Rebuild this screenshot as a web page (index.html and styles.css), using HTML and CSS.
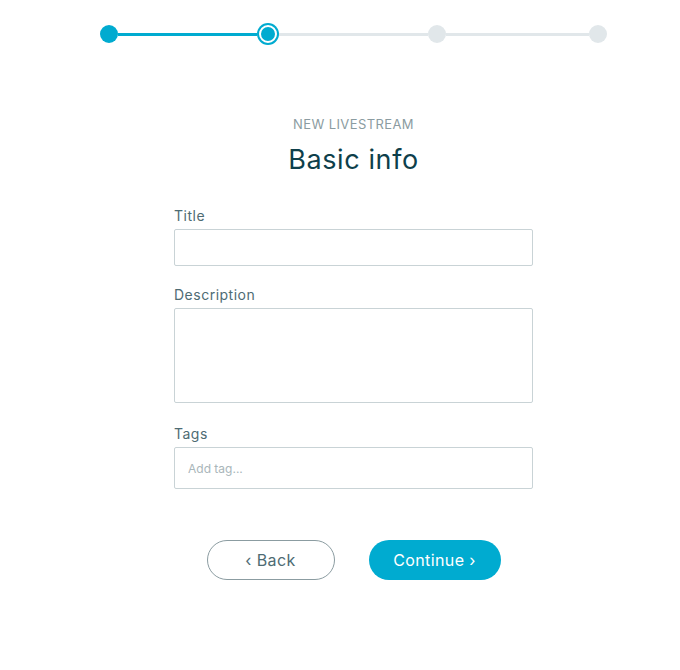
FILE: index.html
```html
<!DOCTYPE html>
<html lang="en">
<head>
    <meta charset="UTF-8">
    <meta name="viewport" content="width=device-width, initial-scale=1.0">
    <title>New livestream</title>
    <link rel="stylesheet" href="styles.css">
</head>
<body>
    <div class="page">
        <!-- steps -->
        <div class="steps">
            <span class="dot done"></span>
            <span class="line done w1"></span>
            <span class="dot current"></span>
            <span class="line w2"></span>
            <span class="dot"></span>
            <span class="line w3"></span>
            <span class="dot"></span>
        </div>

        <p class="eyebrow">NEW LIVESTREAM</p>
        <h1 class="heading">Basic info</h1>

        <form class="form">
            <label class="field">
                <span class="label">Title</span>
                <input type="text" class="input">
            </label>
            <label class="field field-tall">
                <span class="label">Description</span>
                <textarea class="input textarea"></textarea>
            </label>
            <label class="field">
                <span class="label">Tags</span>
                <input type="text" class="input tags" placeholder="Add tag...">
            </label>

            <div class="actions">
                <button type="button" class="btn btn-back">&lsaquo; Back</button>
                <button type="button" class="btn btn-next">Continue &rsaquo;</button>
            </div>
        </form>
    </div>
</body>
</html>
```

FILE: styles.css
```css
html, body {
    margin: 0;
    background: #fff;
    font-family: Inter, "Open Sans", sans-serif;
}

.page {
    width: 680px;
    box-sizing: border-box;
    padding-left: 27px;
    display: flex;
    flex-direction: column;
    align-items: center;
}

/* ステップ表示 */
.steps {
    display: flex;
    align-items: center;
    margin-top: 23px;
    height: 22px;
}

.dot {
    width: 18px;
    height: 18px;
    border-radius: 50%;
    background-color: #e1e7ea;
    flex: none;
}

.dot.done {
    background-color: #00abd0;
}

.dot.current {
    width: 14px;
    height: 14px;
    margin: 0 2px;
    background-color: #00abd0;
    border: 2px solid #fff;
    box-shadow: 0 0 0 2px #00abd0;
}

.line {
    height: 3px;
    background-color: #e1e7ea;
    flex: none;
}

.line.done {
    background-color: #00abd0;
}

.w1 { width: 139px; }
.w2 { width: 149px; }
.w3 { width: 143px; }

.eyebrow {
    margin: 71px 0 0;
    font-size: 13px;
    letter-spacing: 0.4px;
    color: #8b9ca1;
}

.heading {
    margin: 11px 0 0;
    font-size: 27px;
    font-weight: 400;
    letter-spacing: 0.6px;
    color: #0e3f4b;
}

.form {
    width: 359px;
    margin-top: 31px;
}

.field {
    display: block;
    margin-bottom: 20px;
}

.field-tall {
    margin-bottom: 22px;
}

.label {
    display: block;
    font-size: 14px;
    letter-spacing: 0.5px;
    color: #4e6b73;
    margin-bottom: 5px;
}

.input {
    display: block;
    box-sizing: border-box;
    width: 100%;
    height: 37px;
    margin: 0;
    border: 1px solid #c9d3d6;
    border-radius: 2px;
    font-family: inherit;
    font-size: 14px;
    padding: 0 13px;
}

.textarea {
    height: 95px;
    resize: none;
    padding: 10px 13px;
}

.tags {
    height: 42px;
    font-size: 12px;
}

.tags::placeholder {
    color: #a9b6ba;
}

.actions {
    display: flex;
    justify-content: center;
    gap: 34px;
    margin-top: 51px;
}

.btn {
    height: 40px;
    border-radius: 20px;
    font-family: inherit;
    font-size: 16px;
    letter-spacing: 0.4px;
    cursor: pointer;
}

.btn-back {
    width: 128px;
    background: #fff;
    border: 1px solid #8b9ca1;
    color: #4e6b73;
}

.btn-next {
    width: 132px;
    background: #00abd0;
    border: none;
    color: #fff;
}
```
